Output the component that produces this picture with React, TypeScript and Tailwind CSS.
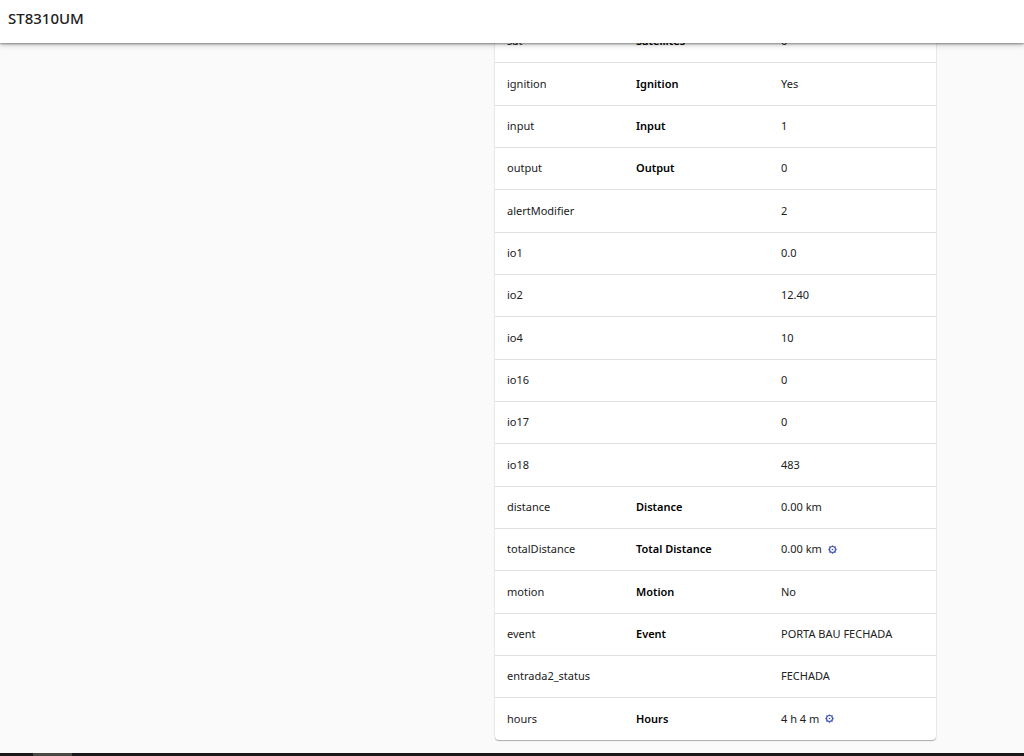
import { clsx } from 'clsx'

// ── Types ──────────────────────────────────────────────────────────────────

interface Attribute {
  key: string
  label?: string
  value: string
  editable?: boolean
}

// ── Data ───────────────────────────────────────────────────────────────────

const ATTRIBUTES: Attribute[] = [
  { key: 'sat', label: 'Satellites', value: '0' },
  { key: 'ignition', label: 'Ignition', value: 'Yes' },
  { key: 'input', label: 'Input', value: '1' },
  { key: 'output', label: 'Output', value: '0' },
  { key: 'alertModifier', value: '2' },
  { key: 'io1', value: '0.0' },
  { key: 'io2', value: '12.40' },
  { key: 'io4', value: '10' },
  { key: 'io16', value: '0' },
  { key: 'io17', value: '0' },
  { key: 'io18', value: '483' },
  { key: 'distance', label: 'Distance', value: '0.00 km' },
  { key: 'totalDistance', label: 'Total Distance', value: '0.00 km', editable: true },
  { key: 'motion', label: 'Motion', value: 'No' },
  { key: 'event', label: 'Event', value: 'PORTA BAU FECHADA' },
  { key: 'entrada2_status', value: 'FECHADA' },
  { key: 'hours', label: 'Hours', value: '4 h 4 m', editable: true },
]

export default function App() {
  return (
    <div className="flex h-screen flex-col overflow-hidden bg-[#fafafa] font-['Noto_Sans',sans-serif] text-[#212121]">
      <header className="z-10 flex h-[43px] shrink-0 items-center bg-white px-2 pb-2 shadow-[0_1px_2px_rgba(0,0,0,0.4),0_2px_6px_rgba(0,0,0,0.2)]">
        <h1 className="text-[15px] leading-6 font-medium">ST8310UM</h1>
      </header>

      {/* scrolled to the end, so the first row slides under the header */}
      <main className="flex min-h-0 flex-1 flex-col items-end justify-end px-[88px] pb-[13px]">
        <div className="w-full max-w-[441px] shrink-0 overflow-hidden rounded-b bg-white shadow-[0_1px_1px_rgba(0,0,0,0.28),0_0_2px_rgba(0,0,0,0.16)]">
          <AttributeTable />
        </div>
      </main>

      <footer className="flex h-[3px] shrink-0 bg-[#1a1818]">
        <div className="ml-[33px] w-[39px] bg-[#4b4946]" />
      </footer>
    </div>
  )
}

// ── AttributeTable ─────────────────────────────────────────────────────────

function AttributeTable() {
  return (
    <table className="w-full table-fixed border-collapse text-left text-[11px] leading-4">
      <colgroup>
        <col className="w-[129px]" />
        <col className="w-[145px]" />
        <col />
      </colgroup>
      <tbody>
        {ATTRIBUTES.map((item, i) => (
          <tr
            key={item.key}
            className={clsx(
              'h-[42px] nth-[3n+2]:h-[43px]',
              i < ATTRIBUTES.length - 1 && 'border-b border-[#e0e0e0]',
            )}
          >
            <td className="px-3">{item.key}</td>
            <td className="px-3 font-semibold text-black">{item.label}</td>
            <td className="px-3">
              <div className="flex items-center gap-1.5">
                {item.value}
                {item.editable && <EditLink name={item.key} />}
              </div>
            </td>
          </tr>
        ))}
      </tbody>
    </table>
  )
}

// ── EditLink ───────────────────────────────────────────────────────────────

function EditLink({ name }: { name: string }) {
  return (
    <a href={`#${name}`} aria-label={`Edit ${name}`} className="text-[#3f51b5]">
      <svg viewBox="0 0 24 24" className="size-[9px]" fill="none" stroke="currentColor">
        <circle cx="12" cy="12" r="8" strokeWidth="3" />
        <circle cx="12" cy="12" r="2.2" fill="currentColor" stroke="none" />
        <path
          strokeWidth="3.4"
          d="M12 1v3M12 20v3M1 12h3M20 12h3M4 4l2.4 2.4M17.6 17.6L20 20M4 20l2.4-2.4M17.6 6.4L20 4"
        />
      </svg>
    </a>
  )
}
